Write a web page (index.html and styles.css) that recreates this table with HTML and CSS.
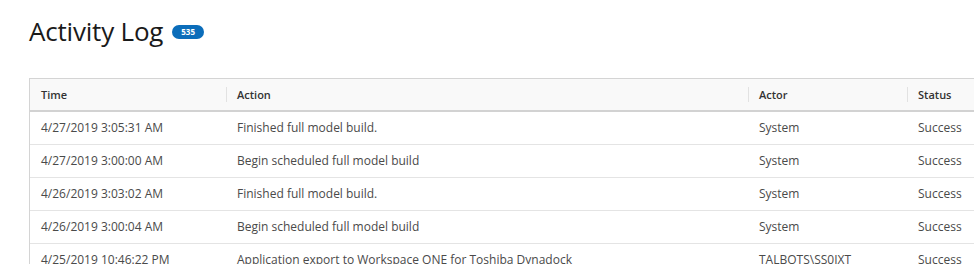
FILE: index.html
```html
<!DOCTYPE html>
<html>
<head>
<meta charset="utf-8">
<link rel="stylesheet" href="styles.css">
</head>
<body>
<div class="page">
  <h1 class="title">Activity Log <span class="badge">535</span></h1>
  <div class="table-wrap">
    <table class="log">
      <colgroup>
        <col class="c-time">
        <col class="c-action">
        <col class="c-actor">
        <col class="c-status">
      </colgroup>
      <thead>
        <tr>
          <th>Time</th>
          <th>Action</th>
          <th>Actor</th>
          <th>Status</th>
        </tr>
      </thead>
      <tbody>
        <tr><td>4/27/2019 3:05:31 AM</td><td>Finished full model build.</td><td>System</td><td>Success</td></tr>
        <tr><td>4/27/2019 3:00:00 AM</td><td>Begin scheduled full model build</td><td>System</td><td>Success</td></tr>
        <tr><td>4/26/2019 3:03:02 AM</td><td>Finished full model build.</td><td>System</td><td>Success</td></tr>
        <tr><td>4/26/2019 3:00:04 AM</td><td>Begin scheduled full model build</td><td>System</td><td>Success</td></tr>
        <tr><td>4/25/2019 10:46:22 PM</td><td>Application export to Workspace ONE for Toshiba Dynadock</td><td>TALBOTS\SS0IXT</td><td>Success</td></tr>
      </tbody>
    </table>
  </div>
</div>
</body>
</html>
```
FILE: styles.css
```css
html, body {
  margin: 0;
  padding: 0;
  background: #fff;
  overflow: hidden;
}
.page {
  padding: 13px 0 0 29px;
  font-family: "Open Sans", "Liberation Sans", sans-serif;
}
.title {
  margin: 0;
  font-size: 26px;
  font-weight: 400;
  color: #1a1a1a;
  line-height: 36px;
  display: flex;
  align-items: center;
  gap: 9px;
  letter-spacing: -0.2px;
}
.badge {
  display: inline-block;
  background: #0b6dba;
  color: #fff;
  font-size: 8px;
  font-weight: 700;
  line-height: 14px;
  height: 14px;
  padding: 0 9px;
  border-radius: 7px;
  letter-spacing: 0;
  position: relative;
  top: 1px;
}
.table-wrap {
  margin-top: 29px;
  border: 1px solid #d4d4d4;
  border-right: none;
  width: 945px;
}
.log {
  border-collapse: collapse;
  width: 100%;
  table-layout: fixed;
}
.c-time { width: 196px; }
.c-action { width: 522px; }
.c-actor { width: 159px; }
.log th,
.log td {
  box-sizing: border-box;
  text-align: left;
  padding: 0 11px;
  white-space: nowrap;
  overflow: hidden;
}
.log th {
  font-size: 11px;
  font-weight: 600;
  color: #333;
  background: #f9f9f9;
  height: 32px;
  border-bottom: 2px solid #d2d2d2;
  position: relative;
}
.log th + th::before {
  content: "";
  position: absolute;
  left: 0;
  top: 8px;
  bottom: 8px;
  border-left: 1px solid #e2e2e2;
}
.log td {
  font-size: 12px;
  color: #4a4a4a;
  height: 33px;
  border-bottom: 1px solid #e4e4e4;
}
```
